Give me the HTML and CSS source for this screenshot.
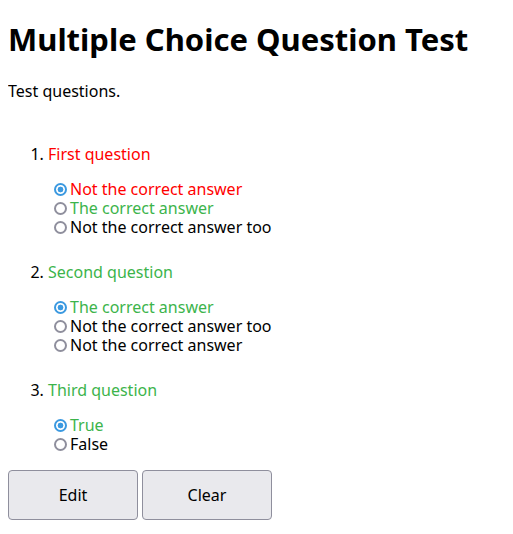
FILE: index.html
```html
<!DOCTYPE html>
<html>
<head>
<meta charset="utf-8">
<link rel="stylesheet" href="styles.css">
</head>
<body>
<h1 class="title">Multiple Choice Question Test</h1>
<p class="intro">Test questions.</p>
<ol class="questions">
  <li class="question">
    <span class="q-text wrong">First question</span>
    <div class="options">
      <label class="option wrong"><input type="radio" name="q1" checked><span>Not the correct answer</span></label>
      <label class="option right"><input type="radio" name="q1"><span>The correct answer</span></label>
      <label class="option"><input type="radio" name="q1"><span>Not the correct answer too</span></label>
    </div>
  </li>
  <li class="question">
    <span class="q-text right">Second question</span>
    <div class="options">
      <label class="option right"><input type="radio" name="q2" checked><span>The correct answer</span></label>
      <label class="option"><input type="radio" name="q2"><span>Not the correct answer too</span></label>
      <label class="option"><input type="radio" name="q2"><span>Not the correct answer</span></label>
    </div>
  </li>
  <li class="question">
    <span class="q-text right">Third question</span>
    <div class="options">
      <label class="option right"><input type="radio" name="q3" checked><span>True</span></label>
      <label class="option"><input type="radio" name="q3"><span>False</span></label>
    </div>
  </li>
</ol>
<div class="actions">
  <button class="btn">Edit</button>
  <button class="btn">Clear</button>
</div>
</body>
</html>
```
FILE: styles.css
```css
body {
  margin: 8px;
  font-family: "Noto Sans", "DejaVu Sans", sans-serif;
  font-size: 16px;
  color: #000;
  background: #fff;
}
.title {
  font-size: 31px;
  font-weight: bold;
  margin: 12px 0 0;
  line-height: 38px;
}
.intro {
  margin: 24px 0 0;
  line-height: 19px;
}
.questions {
  margin: 44px 0 0;
  padding-left: 40px;
}
.question {
  line-height: 19px;
  margin-bottom: 26px;
}
.options {
  margin-top: 16px;
  display: flex;
  flex-direction: column;
}
.option {
  display: flex;
  align-items: center;
  height: 19px;
}
.option input {
  appearance: none;
  -webkit-appearance: none;
  width: 13px;
  height: 13px;
  margin: 0 3px 0 6px;
  border: 2px solid #8f8f9d;
  border-radius: 50%;
  box-sizing: border-box;
  background: #fff;
}
.option input:checked {
  border-color: #3b99e0;
  background: radial-gradient(circle, #3b99e0 0 2.6px, #fff 3.2px);
}
.wrong { color: #ff0000; }
.right { color: #3cb44b; }
.actions {
  display: flex;
  gap: 4px;
  margin-top: -10px;
}
.btn {
  width: 130px;
  height: 50px;
  font-family: inherit;
  font-size: 16px;
  color: #000;
  background: #e9e9ed;
  border: 1px solid #8f8f9d;
  border-radius: 4px;
}
```
